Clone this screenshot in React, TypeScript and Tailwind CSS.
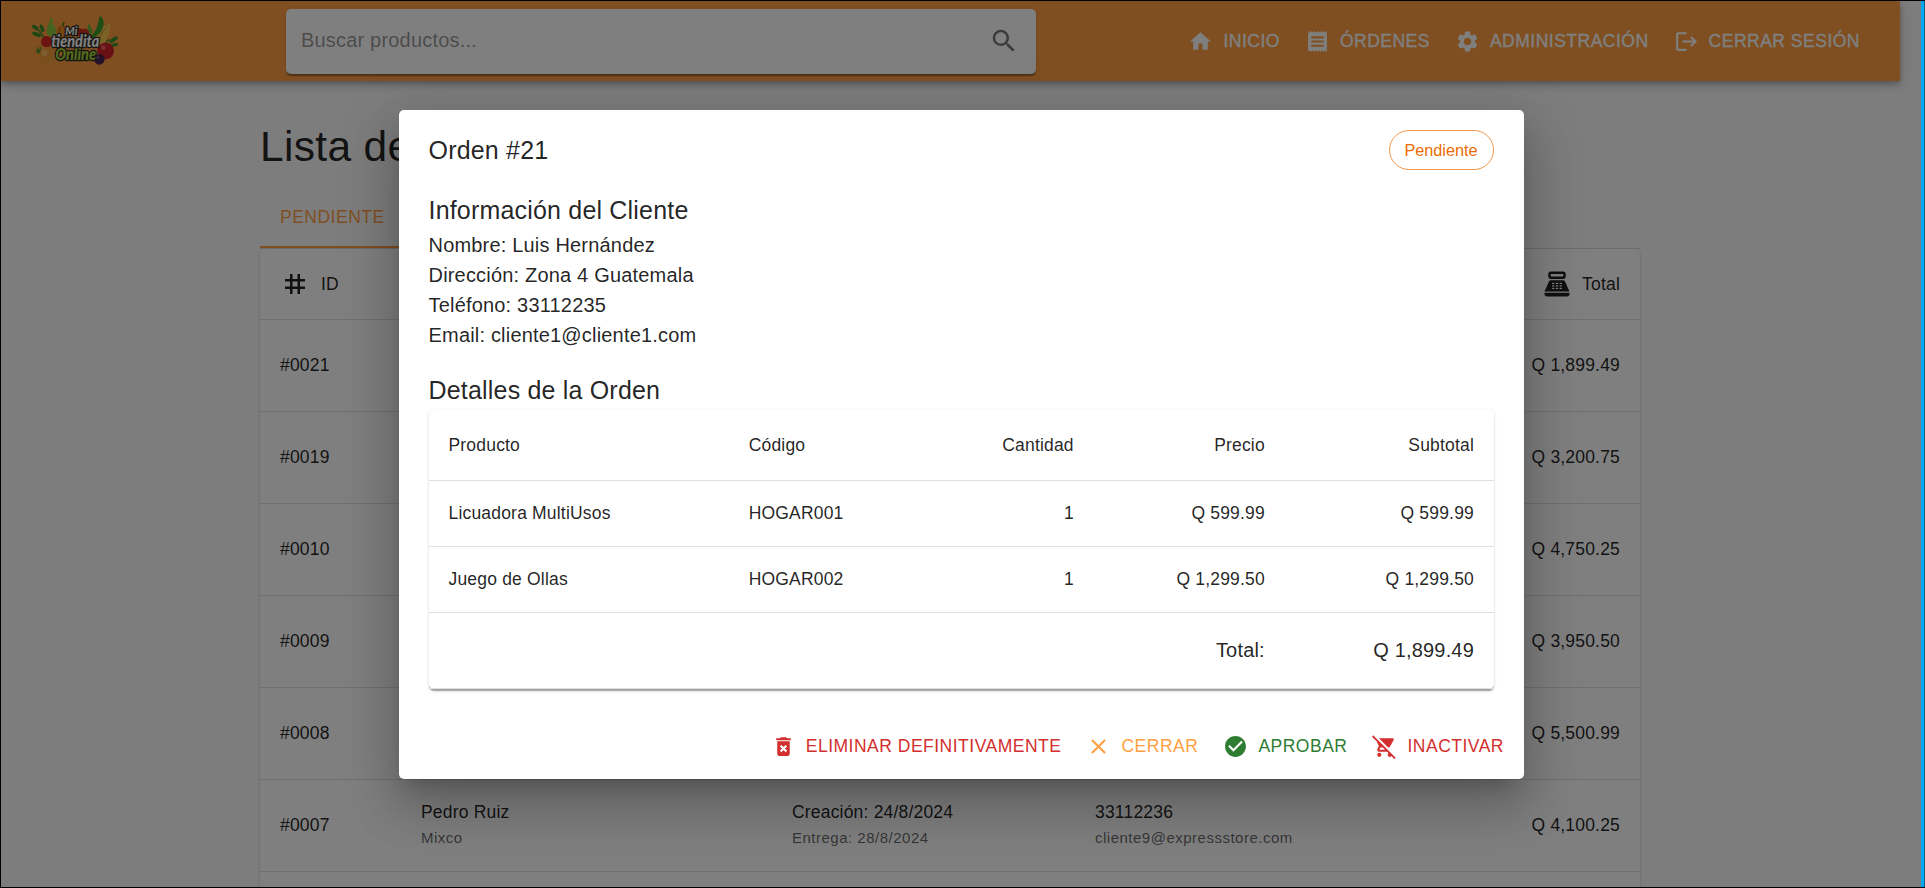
import type { ReactNode } from "react";
import {
  MdCheckCircle,
  MdClose,
  MdDeleteForever,
  MdHome,
  MdLogout,
  MdPointOfSale,
  MdReceipt,
  MdRemoveShoppingCart,
  MdSearch,
  MdSettings,
  MdTag,
} from "react-icons/md";

type Order = {
  id: string;
  total: string;
  client?: [string, string];
  dates?: [string, string];
  contact?: [string, string];
};

const orders: Order[] = [
  { id: "#0021", total: "Q 1,899.49" },
  { id: "#0019", total: "Q 3,200.75" },
  { id: "#0010", total: "Q 4,750.25" },
  { id: "#0009", total: "Q 3,950.50" },
  { id: "#0008", total: "Q 5,500.99" },
  {
    id: "#0007",
    total: "Q 4,100.25",
    client: ["Pedro Ruiz", "Mixco"],
    dates: ["Creación: 24/8/2024", "Entrega: 28/8/2024"],
    contact: ["33112236", "cliente9@expressstore.com"],
  },
];

const items = [
  { name: "Licuadora MultiUsos", code: "HOGAR001", qty: "1", price: "Q 599.99", subtotal: "Q 599.99" },
  { name: "Juego de Ollas", code: "HOGAR002", qty: "1", price: "Q 1,299.50", subtotal: "Q 1,299.50" },
];

function Logo() {
  return (
    <svg viewBox="0 0 330 195" className="h-[65px] w-[110px]">
      <g fill="#3f8f2a">
        <path d="M72 96 Q64 70 40 50 Q66 62 76 92z" />
        <ellipse cx="46" cy="56" rx="12" ry="6" transform="rotate(35 46 56)" />
        <ellipse cx="66" cy="58" rx="12" ry="6" transform="rotate(70 66 58)" />
        <ellipse cx="50" cy="76" rx="14" ry="6" transform="rotate(20 50 76)" />
        <ellipse cx="281" cy="92" rx="15" ry="6" transform="rotate(-35 281 92)" />
        <ellipse cx="282" cy="108" rx="13" ry="5" transform="rotate(-15 282 108)" />
        <path d="M48 112l10 12 2-16 5 17 12-9-7 18-15 0-10-10 8 2z" />
      </g>
      <path d="M270 42Q232 58 222 100l22 10Q272 86 270 42z" fill="#f3c64f" />
      <path d="M264 52Q242 70 236 100M256 58Q238 74 230 96" stroke="#c88a28" strokeWidth="2" fill="none" />
      <path d="M244 22Q258 44 244 66Q230 88 198 94Q222 76 230 56Q236 38 238 24z" fill="#3f9a2c" />
      <path d="M206 42Q198 66 206 88l12-22z" fill="#6db53a" />
      <circle cx="126" cy="70" r="19" fill="#ee8a1f" />
      <path d="M120 52Q112 70 120 88M132 52Q140 70 132 88" stroke="#b85f10" strokeWidth="3" fill="none" />
      <path d="M128 52l4-12" stroke="#4a7a1f" strokeWidth="5" />
      <circle cx="194" cy="72" r="13" fill="#d92b22" />
      <circle cx="178" cy="70" r="12" fill="#c92a1e" />
      <path d="M88 40l4-14 6 1-1 14Q106 54 110 64Q110 82 95 82Q80 82 80 66Q82 50 88 40z" fill="#8cc63f" />
      <circle cx="80" cy="98" r="17" fill="#d8291f" />
      <circle cx="83" cy="140" r="27" fill="#f2a13a" />
      <circle cx="74" cy="132" r="9" fill="#f8c063" />
      <circle cx="257" cy="126" r="25" fill="#d3202a" />
      <circle cx="250" cy="116" r="7" fill="#f0645c" />
      <path d="M257 104q4-10 12-12" stroke="#4a7a1f" strokeWidth="4" fill="none" />
      <circle cx="238" cy="151" r="16" fill="#4b2350" />
      <circle cx="233" cy="146" r="4" fill="#8d5c94" />
      <g
        fontFamily="Lato, 'Liberation Sans', sans-serif"
        fontWeight="900"
        fontStyle="italic"
        stroke="#2c2a20"
        strokeWidth="8"
        strokeLinejoin="round"
        paintOrder="stroke"
      >
        <text x="106" y="153" fontSize="50" fill="#a8d63c" textLength="122" lengthAdjust="spacingAndGlyphs">Online</text>
        <text x="94" y="113" fontSize="50" fill="#fff" textLength="144" lengthAdjust="spacingAndGlyphs">tiendita</text>
        <text x="136" y="79" fontSize="35" fill="#fff" textLength="36" lengthAdjust="spacingAndGlyphs">Mi</text>
      </g>
    </svg>
  );
}

function NavItem({ icon, label }: { icon: ReactNode; label: string }) {
  return (
    <a className="flex items-center gap-2.5 text-[17.5px] leading-[30px] font-medium tracking-[0.5px] text-white [-webkit-text-stroke:0.3px_white]">
      <span className="text-[25px]">{icon}</span>
      {label}
    </a>
  );
}

function ActionButton({ icon, label, tone }: { icon: ReactNode; label: string; tone: string }) {
  return (
    <button className={`flex h-[45px] items-center gap-2.5 pr-2.5 pl-[5px] text-[17.5px] tracking-[0.5px] ${tone}`}>
      <span className="text-[25px]">{icon}</span>
      {label}
    </button>
  );
}

function TwoLine({ lines }: { lines?: [string, string] }) {
  if (!lines) return <div />;
  return (
    <div className="pb-0.5">
      <p className="text-[17.5px] leading-[25px] tracking-[0.1874px]">{lines[0]}</p>
      <p className="text-[15px] leading-[25px] tracking-[0.5px] text-black/60">{lines[1]}</p>
    </div>
  );
}

function Page() {
  return (
    <div className="h-full w-full bg-[#fafafa] text-black/87">
      <header className="flex h-20 w-[1899px] items-center bg-[#ff9f43] pr-10 pl-[19px] shadow-[0_2.5px_5px_-1.25px_rgba(0,0,0,0.2),0_5px_6.25px_rgba(0,0,0,0.14),0_1.25px_12.5px_rgba(0,0,0,0.12)]">
        <Logo />
        <div className="ml-[156px] flex h-[65px] w-[750px] items-center justify-between rounded-[5px] bg-white pr-[17px] pl-[15px] shadow-[0_2.5px_1.25px_-1.25px_rgba(0,0,0,0.2),0_1.25px_1.25px_rgba(0,0,0,0.14),0_1.25px_3.75px_rgba(0,0,0,0.12)]">
          <span className="pb-0.5 text-[20px] tracking-[0.1876px] text-black/42">Buscar productos...</span>
          <MdSearch className="size-[30px] text-black/54" />
        </div>
        <nav className="ml-auto flex items-center gap-[25px]">
          <NavItem icon={<MdHome />} label="INICIO" />
          <NavItem icon={<MdReceipt />} label="ÓRDENES" />
          <NavItem icon={<MdSettings />} label="ADMINISTRACIÓN" />
          <NavItem icon={<MdLogout />} label="CERRAR SESIÓN" />
        </nav>
      </header>
      <main className="ml-[259px] w-[1380px] pt-10">
        <h1 className="text-[42.5px] leading-[52px] tracking-[0.3124px]">Lista de</h1>
        <div className="mt-[14px] flex h-[62px] border-b border-black/12">
          <div className="flex h-[61px] items-center border-b-[2.5px] border-[#ff9f43] px-5 pt-0.5 text-[17.5px] tracking-[0.5px] text-[#ff9f43]">
            PENDIENTE
          </div>
          <div className="h-[61px] w-60 border-b-[2.5px] border-[#ff9f43]" />
        </div>
        <section className="rounded-[5px] bg-white text-[17.5px] tracking-[0.1874px] shadow-[0_2.5px_1.25px_-1.25px_rgba(0,0,0,0.2),0_1.25px_1.25px_rgba(0,0,0,0.14),0_1.25px_3.75px_rgba(0,0,0,0.12)]">
          <div className="flex h-[71px] items-center justify-between border-b border-[#e0e0e0] px-5">
            <div className="flex items-center gap-[11px]">
              <MdTag className="size-[30px]" />
              ID
            </div>
            <div className="flex items-center gap-2.5">
              <MdPointOfSale className="size-[30px]" />
              Total
            </div>
          </div>
          {orders.map((o) => (
            <div
              key={o.id}
              className="grid h-[92px] grid-cols-[141px_371px_303px_1fr] items-center border-b border-[#e0e0e0] px-5"
            >
              <span>{o.id}</span>
              <TwoLine lines={o.client} />
              <TwoLine lines={o.dates} />
              <div className="flex items-center justify-between">
                <TwoLine lines={o.contact} />
                <span>{o.total}</span>
              </div>
            </div>
          ))}
          <div className="h-[92px]" />
        </section>
      </main>
    </div>
  );
}

const headCell = "h-[71px] border-b border-[#e0e0e0] px-5 py-0 font-normal";
const bodyCell = "h-[66px] border-b border-[#e0e0e0] px-5 py-0";

function OrderDialog() {
  return (
    <div
      role="dialog"
      className="flex h-[669px] w-[1125px] flex-col rounded-[5px] bg-white text-black/87 shadow-[0_13.75px_18.75px_-8.75px_rgba(0,0,0,0.2),0_30px_47.5px_3.75px_rgba(0,0,0,0.14),0_11.25px_57.5px_10px_rgba(0,0,0,0.12)]"
    >
      <div className="flex h-20 items-center justify-between pr-[30px] pl-[29.5px]">
        <h2 className="pt-0.5 text-[25px] tracking-[0.1875px]">Orden #21</h2>
        <span className="flex h-10 w-[105px] items-center justify-center rounded-full border border-[#ed6c02]/70 pr-px text-[16.25px] text-[#ed6c02]">
          Pendiente
        </span>
      </div>
      <div className="pr-[30px] pl-[29.5px]">
        <h3 className="text-[25px] leading-10 tracking-[0.1875px]">Información del Cliente</h3>
        <div className="text-[20px] leading-[30px] tracking-[0.1876px]">
          <p>Nombre: Luis Hernández</p>
          <p>Dirección: Zona 4 Guatemala</p>
          <p>Teléfono: 33112235</p>
          <p>Email: cliente1@cliente1.com</p>
        </div>
        <h3 className="mt-5 text-[25px] leading-10 tracking-[0.1875px]">Detalles de la Orden</h3>
        <div className="rounded-[5px] bg-white shadow-[0_2.5px_1.25px_-1.25px_rgba(0,0,0,0.2),0_1.25px_1.25px_rgba(0,0,0,0.14),0_1.25px_3.75px_rgba(0,0,0,0.12)]">
          <table className="w-full table-fixed border-separate border-spacing-0 text-[17.5px] leading-[25px] tracking-[0.1874px]">
            <colgroup>
              <col className="w-[300px]" />
              <col className="w-[190px]" />
              <col className="w-[175px]" />
              <col className="w-[191px]" />
              <col className="w-[209px]" />
            </colgroup>
            <thead>
              <tr className="text-right">
                <th className={`${headCell} text-left`}>Producto</th>
                <th className={`${headCell} text-left`}>Código</th>
                <th className={headCell}>Cantidad</th>
                <th className={headCell}>Precio</th>
                <th className={headCell}>Subtotal</th>
              </tr>
            </thead>
            <tbody>
              {items.map((i) => (
                <tr key={i.code} className="text-right">
                  <td className={`${bodyCell} text-left`}>{i.name}</td>
                  <td className={`${bodyCell} text-left`}>{i.code}</td>
                  <td className={bodyCell}>{i.qty}</td>
                  <td className={bodyCell}>{i.price}</td>
                  <td className={bodyCell}>{i.subtotal}</td>
                </tr>
              ))}
              <tr className="text-right text-[20px]">
                <td colSpan={3} className="h-[76px] border-b border-[#e0e0e0] p-0" />
                <td className="h-[76px] border-b border-[#e0e0e0] px-5 py-0">Total:</td>
                <td className="h-[76px] border-b border-[#e0e0e0] px-5 py-0">Q 1,899.49</td>
              </tr>
            </tbody>
          </table>
        </div>
      </div>
      <div className="mt-auto flex items-center justify-end gap-[10px] p-2.5">
        <ActionButton icon={<MdDeleteForever />} label="ELIMINAR DEFINITIVAMENTE" tone="text-[#d32f2f]" />
        <ActionButton icon={<MdClose />} label="CERRAR" tone="text-[#ff9f43]" />
        <ActionButton icon={<MdCheckCircle />} label="APROBAR" tone="text-[#2e7d32]" />
        <ActionButton icon={<MdRemoveShoppingCart />} label="INACTIVAR" tone="text-[#d32f2f]" />
      </div>
    </div>
  );
}

export default function App() {
  return (
    <div className="flex h-[888px] w-[1925px] overflow-hidden border-y border-l border-black font-['Liberation_Sans',Arial,sans-serif]">
      <div className="relative h-full w-[1920px] overflow-hidden">
        <Page />
        <div className="absolute inset-0 flex items-start bg-black/50 pt-[109px] pl-[398px]">
          <OrderDialog />
        </div>
      </div>
      <div className="h-full w-[3px] bg-[#00a8f8]" />
      <div className="h-full w-px bg-[#0b5f8a]" />
    </div>
  );
}
